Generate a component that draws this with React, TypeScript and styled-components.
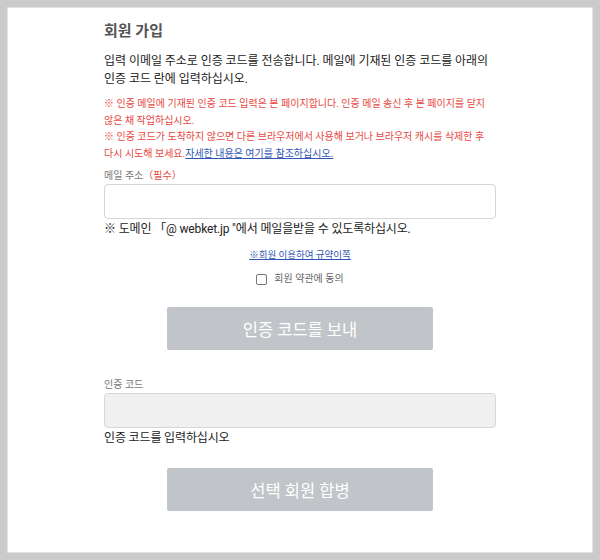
import React from "react";
import styled, { createGlobalStyle } from "styled-components";

const Global = createGlobalStyle`
  html, body { margin: 0; padding: 0; background: #cbcbcb; }
  body { font-family: Roboto, "Noto Sans CJK KR", "Noto Sans", sans-serif; }
  * { box-sizing: border-box; }
`;

const Page = styled.div`
  padding: 7px;
  height: 560px;
`;

const Card = styled.div`
  background: #fff;
  height: 546px;
  border: 1px solid #e2e2e2;
`;

const Column = styled.div`
  width: 392px;
  margin: 0 auto;
  padding-top: 12px;
  display: flex;
  flex-direction: column;
`;

const Title = styled.h1`
  margin: 0;
  font-size: 15px;
  font-weight: 700;
  color: #555;
  line-height: 22px;
`;

const Lead = styled.p`
  margin: 10px 0 0;
  font-size: 12px;
  letter-spacing: -0.05px;
  line-height: 18px;
  color: #222;
  white-space: nowrap;
`;

const Notes = styled.div`
  margin-top: 8px;
  font-size: 10px;
  line-height: 16.5px;
  color: #e8473f;
  white-space: nowrap;
`;

const NoteLink = styled.a`
  color: #2f55b5;
  text-decoration: underline;
`;

const Label = styled.div<{ $top: number }>`
  margin-top: ${(p) => p.$top}px;
  font-size: 10px;
  line-height: 14px;
  color: #777;
`;

const Required = styled.span`
  color: #e8473f;
`;

const Input = styled.div<{ $disabled?: boolean }>`
  margin-top: 1px;
  height: 35px;
  border: 1px solid #d6d6d6;
  border-radius: 4px;
  background: ${(p) => (p.$disabled ? "#f0f0f0" : "#fff")};
`;

const Hint = styled.div`
  margin-top: 2px;
  font-size: 12px;
  letter-spacing: -0.15px;
  line-height: 16px;
  color: #222;
`;

const Center = styled.div`
  display: flex;
  flex-direction: column;
  align-items: center;
`;

const TermsLink = styled.a`
  margin-top: 11px;
  font-size: 9.5px;
  line-height: 14px;
  color: #2f55b5;
  text-decoration: underline;
`;

const CheckRow = styled.label`
  margin-top: 10px;
  display: flex;
  align-items: center;
  gap: 7px;
  font-size: 10px;
  line-height: 14px;
  color: #666;
`;

const Box = styled.span`
  width: 11px;
  height: 11px;
  border: 1px solid #777;
  border-radius: 2px;
`;

const Button = styled.div<{ $top: number }>`
  margin-top: ${(p) => p.$top}px;
  width: 266px;
  height: 43px;
  background: #c1c5c9;
  border-radius: 2px;
  color: #fff;
  font-size: 16.5px;
  display: flex;
  align-items: center;
  justify-content: center;
`;

export default function App() {
  return (
    <>
      <Global />
      <Page>
        <Card>
          <Column>
            <Title>회원 가입</Title>
            <Lead>
              입력 이메일 주소로 인증 코드를 전송합니다. 메일에 기재된 인증 코드를 아래의
              <br />
              인증 코드 란에 입력하십시오.
            </Lead>
            <Notes>
              ※ 인증 메일에 기재된 인증 코드 입력은 본 페이지합니다. 인증 메일 송신 후 본 페이지를 닫지
              <br />
              않은 채 작업하십시오.
              <br />
              ※ 인증 코드가 도착하지 않으면 다른 브라우저에서 사용해 보거나 브라우저 캐시를 삭제한 후
              <br />
              다시 시도해 보세요.<NoteLink>자세한 내용은 여기를 참조하십시오.</NoteLink>
            </Notes>
            <Label $top={7}>
              메일 주소<Required>（필수）</Required>
            </Label>
            <Input />
            <Hint>※ 도메인 「@ webket.jp "에서 메일을받을 수 있도록하십시오.</Hint>
            <Center>
              <TermsLink>※회원 이용하여 규약이쪽</TermsLink>
              <CheckRow>
                <Box />
                회원 약관에 동의
              </CheckRow>
              <Button $top={21}>인증 코드를 보내</Button>
            </Center>
            <Label $top={28}>인증 코드</Label>
            <Input $disabled />
            <Hint>인증 코드를 입력하십시오</Hint>
            <Center>
              <Button $top={22}>선택 회원 합병</Button>
            </Center>
          </Column>
        </Card>
      </Page>
    </>
  );
}
